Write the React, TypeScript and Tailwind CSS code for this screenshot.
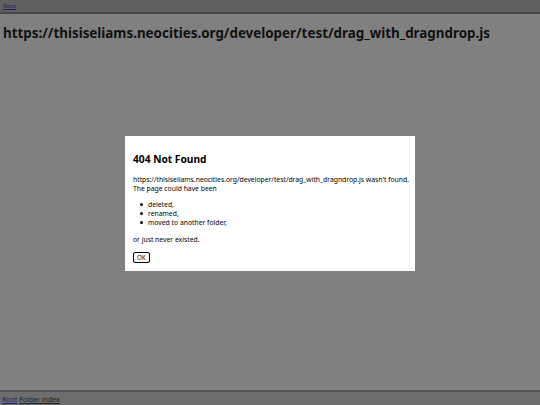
export default function App() {
  const font = { fontFamily: '"Noto Sans", "Open Sans", sans-serif' };
  const items = ["deleted,", "renamed,", "moved to another folder,"];
  return (
    <div className="relative flex h-[405px] w-[540px] flex-col overflow-hidden bg-[#808080] text-black" style={font}>
      <div className="h-[14px] border-b-2 border-[#474747] bg-[#606060] px-[3px] pt-[2px] text-[6px] leading-[8px]">
        <a href="#" className="text-[#1c1c6e] underline">Root</a>
      </div>
      <h1 className="px-[3px] pt-[10px] text-[13.4px] font-bold leading-[18px] text-[#111]">
        https://thisiseliams.neocities.org/developer/test/drag_with_dragndrop.js
      </h1>
      <div className="flex-1" />
      <div className="h-[15px] border-t-2 border-[#555] bg-[#6e6e6e] px-[2px] pt-[3px] text-[7px] leading-[9px] text-[#222]">
        <a href="#" className="text-[#202080] underline">Root</a>{" "}
        <span className="underline">Folder index</span>
      </div>

      <div className="absolute left-[125px] top-[136px] w-[290px] bg-white px-[8px] pb-[8px] pt-[16px] text-[6.8px] leading-[9px]">
        <h2 className="text-[10.2px] font-bold leading-[14px]">404 Not Found</h2>
        <p className="mt-[9px]">
          <span className="whitespace-nowrap">
            https://thisiseliams.neocities.org/developer/test/drag_with_dragndrop.js wasn't found.
          </span>
          <br />
          The page could have been
        </p>
        <ul className="mt-[7px] pl-[7px]">
          {items.map((t) => (
            <li key={t} className="flex items-center">
              <span className="mr-[5px] h-[3px] w-[3px] rounded-full bg-black" />
              {t}
            </li>
          ))}
        </ul>
        <p className="mt-[8px]">or just never existed.</p>
        <button className="mt-[8px] rounded-[2px] border border-black px-[3px] py-[1px] text-[6.2px] leading-[7px]">OK</button>
      </div>
    </div>
  );
}
